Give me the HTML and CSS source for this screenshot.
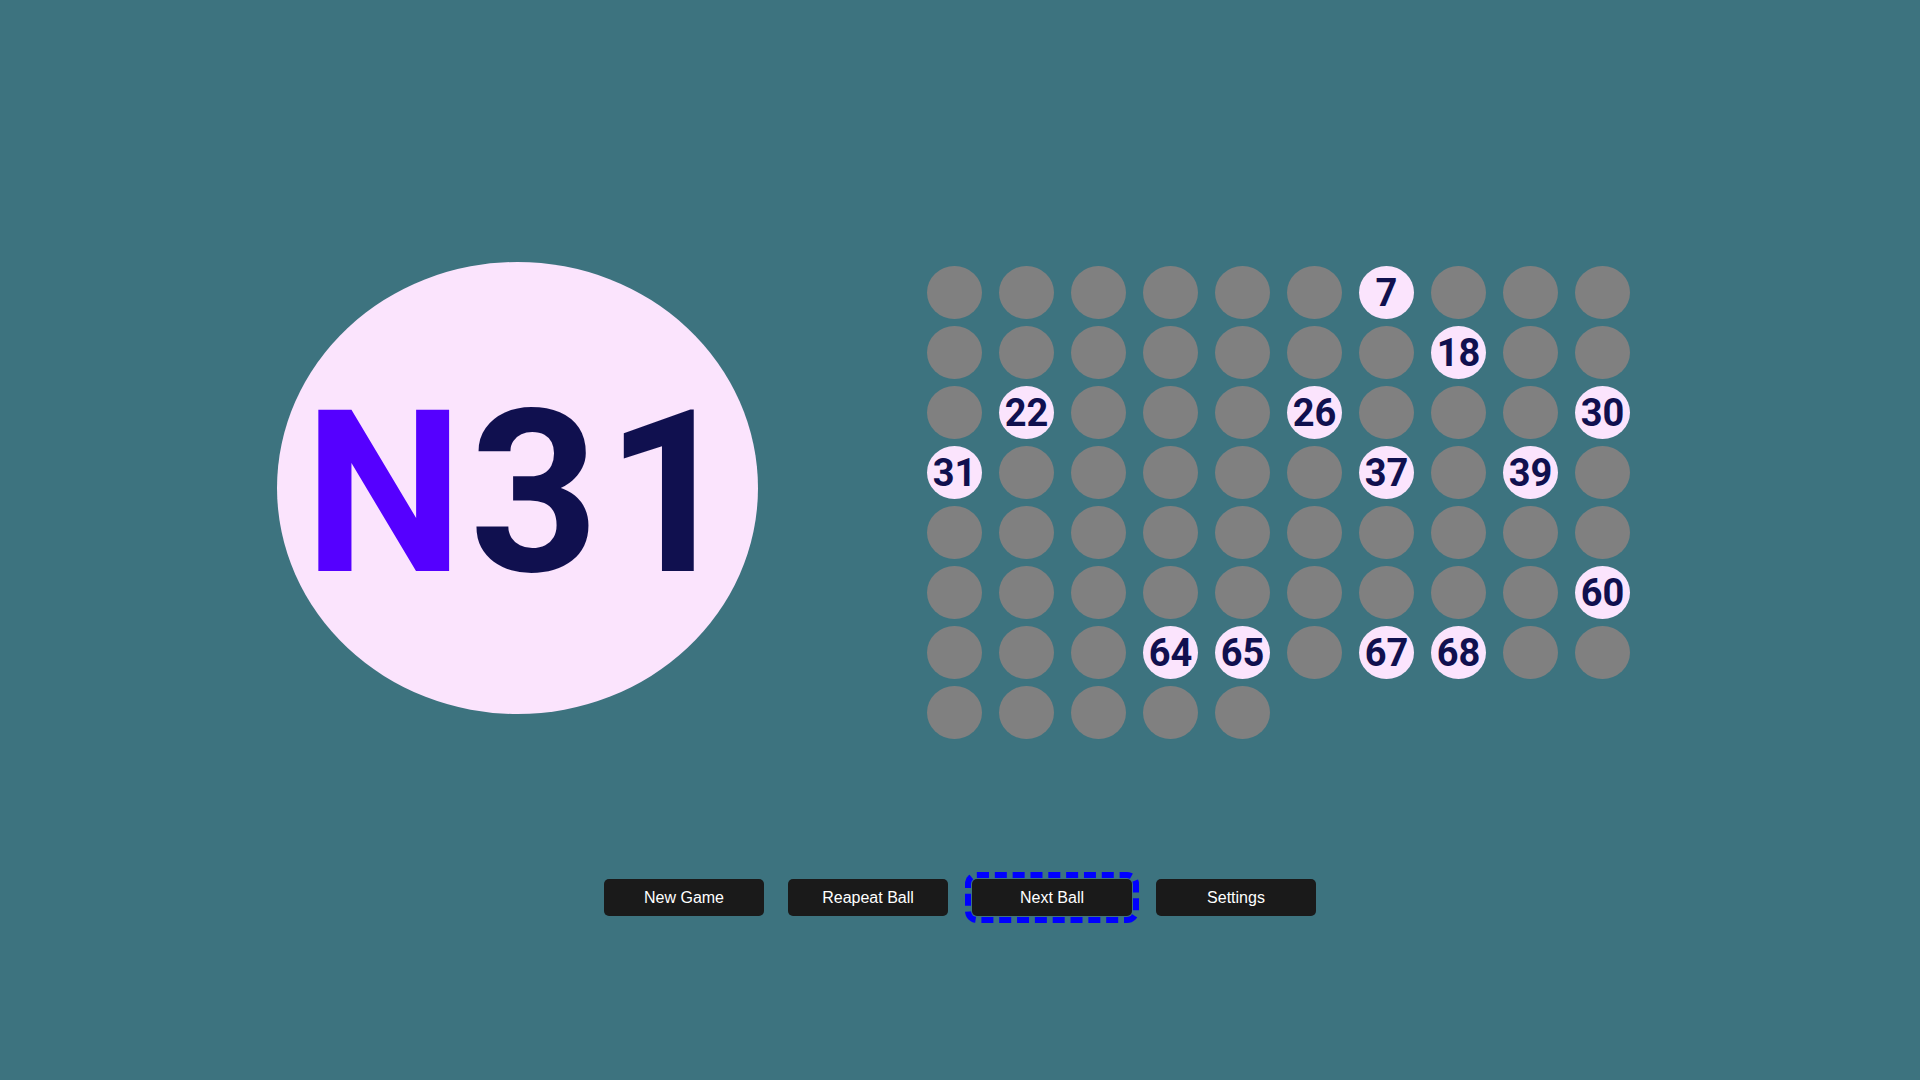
FILE: index.html
```html
<!DOCTYPE html>
<html lang="en">
<head>
<meta charset="utf-8">
<title>Bingo Caller</title>
<link rel="stylesheet" href="styles.css">
</head>
<body>
<main class="app">
  <section class="board">
    <div class="current-ball">
      <span class="current-text"><span class="letter">N</span><span class="digits">31</span></span>
    </div>
    <div class="grid">
      <div class="ball"></div><div class="ball"></div><div class="ball"></div><div class="ball"></div><div class="ball"></div><div class="ball"></div><div class="ball drawn"><span>7</span></div><div class="ball"></div><div class="ball"></div><div class="ball"></div>
      <div class="ball"></div><div class="ball"></div><div class="ball"></div><div class="ball"></div><div class="ball"></div><div class="ball"></div><div class="ball"></div><div class="ball drawn"><span>18</span></div><div class="ball"></div><div class="ball"></div>
      <div class="ball"></div><div class="ball drawn"><span>22</span></div><div class="ball"></div><div class="ball"></div><div class="ball"></div><div class="ball drawn"><span>26</span></div><div class="ball"></div><div class="ball"></div><div class="ball"></div><div class="ball drawn"><span>30</span></div>
      <div class="ball drawn"><span>31</span></div><div class="ball"></div><div class="ball"></div><div class="ball"></div><div class="ball"></div><div class="ball"></div><div class="ball drawn"><span>37</span></div><div class="ball"></div><div class="ball drawn"><span>39</span></div><div class="ball"></div>
      <div class="ball"></div><div class="ball"></div><div class="ball"></div><div class="ball"></div><div class="ball"></div><div class="ball"></div><div class="ball"></div><div class="ball"></div><div class="ball"></div><div class="ball"></div>
      <div class="ball"></div><div class="ball"></div><div class="ball"></div><div class="ball"></div><div class="ball"></div><div class="ball"></div><div class="ball"></div><div class="ball"></div><div class="ball"></div><div class="ball drawn"><span>60</span></div>
      <div class="ball"></div><div class="ball"></div><div class="ball"></div><div class="ball drawn"><span>64</span></div><div class="ball drawn"><span>65</span></div><div class="ball"></div><div class="ball drawn"><span>67</span></div><div class="ball drawn"><span>68</span></div><div class="ball"></div><div class="ball"></div>
      <div class="ball"></div><div class="ball"></div><div class="ball"></div><div class="ball"></div><div class="ball"></div>
    </div>
  </section>
  <nav class="controls">
    <button class="btn" type="button">New Game</button>
    <button class="btn" type="button">Reapeat Ball</button>
    <button class="btn focused" type="button">Next Ball</button>
    <button class="btn" type="button">Settings</button>
  </nav>
</main>
</body>
</html>
```
FILE: styles.css
```css
html, body {
  margin: 0;
  padding: 0;
  width: 100%;
  height: 100%;
}

body {
  background: #3d737f;
  font-family: "Liberation Sans", Arial, sans-serif;
  overflow: hidden;
}

.app {
  display: flex;
  flex-direction: column;
  align-items: center;
  padding-top: 262px;
}

.board {
  display: flex;
  align-items: flex-start;
  gap: 169px;
  padding-right: 13px;
}

.current-ball {
  width: 481px;
  height: 452px;
  border-radius: 50%;
  background: #fbe4fd;
  display: flex;
  align-items: center;
  justify-content: center;
}

.current-text {
  display: inline-block;
  font-family: Roboto, "Liberation Sans", Arial, sans-serif;
  font-weight: bold;
  font-size: 226px;
  line-height: 1;
  letter-spacing: 6px;
  margin-top: 12px;
  margin-left: 10px;
}

.letter {
  color: #5500ff;
}

.digits {
  color: #10104f;
}

.grid {
  margin-top: 4px;
  display: grid;
  grid-template-columns: repeat(10, 55px);
  grid-auto-rows: 53px;
  column-gap: 17px;
  row-gap: 7px;
}

.ball {
  width: 55px;
  height: 53px;
  border-radius: 50%;
  background: #808080;
  display: flex;
  align-items: center;
  justify-content: center;
}

.ball.drawn {
  background: #fbe4fd;
}

.ball span {
  display: inline-block;
  font-family: Roboto, "Liberation Sans", Arial, sans-serif;
  font-weight: bold;
  font-size: 38px;
  line-height: 1;
  color: #10104f;
}

.controls {
  margin-top: 140px;
  display: flex;
  gap: 24px;
}

.btn {
  width: 160px;
  height: 37px;
  border: none;
  border-radius: 5px;
  background: #1a1a1a;
  color: #ffffff;
  font-family: "Liberation Sans", Arial, sans-serif;
  font-size: 16px;
  padding: 0;
}

.btn.focused {
  outline: 6px dashed #0000ff;
  outline-offset: 1px;
}
```
